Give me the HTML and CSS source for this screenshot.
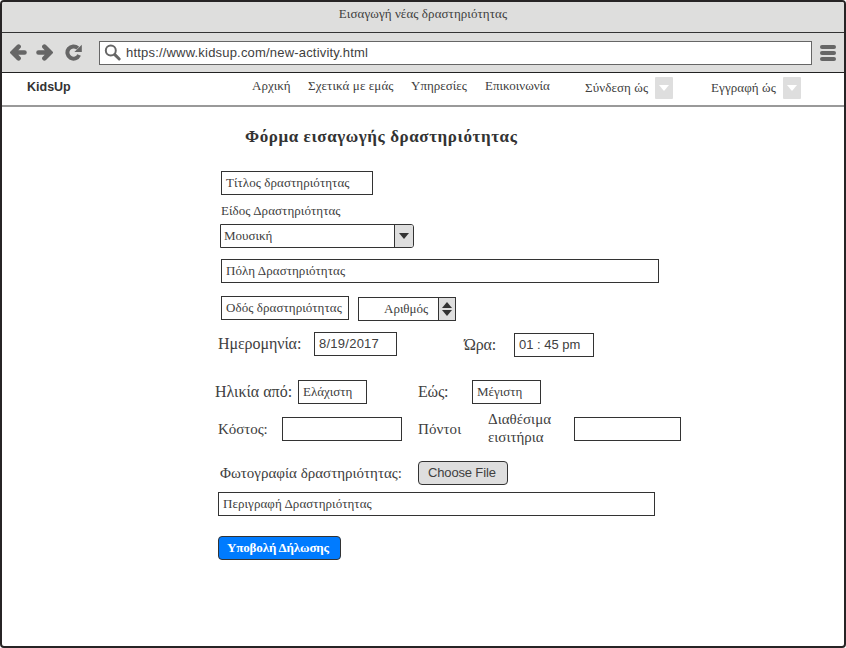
FILE: index.html
```html
<!DOCTYPE html>
<html lang="el">
<head>
<meta charset="utf-8">
<title>Εισαγωγή νέας δραστηριότητας</title>
<link rel="stylesheet" href="styles.css">
</head>
<body>
<div class="browser">
  <header class="titlebar"><span class="t-window">Εισαγωγή νέας δραστηριότητας</span></header>
  <div class="toolbar">
    <svg class="arrow" width="17" height="17" viewBox="0 0 17 17"><path d="M3 8.5H14.5M8.6 2.7L2.8 8.5L8.6 14.3"/></svg>
    <svg class="arrow forward" width="17" height="17" viewBox="0 0 17 17"><path d="M2.5 8.5H14M8.4 2.7L14.2 8.5L8.4 14.3"/></svg>
    <svg class="reload" width="17" height="17" viewBox="0 0 17 17"><path class="ring" d="M12.8 4.2A6.1 6.1 0 1 0 14.1 11"/><path class="tip" d="M16.8 0.8V8H9.4Z"/></svg>
    <div class="address">
      <svg width="18" height="18" viewBox="0 0 18 18"><circle cx="6.8" cy="6.5" r="5"/><path d="M10.8 10.6L15.2 15"/></svg>
      <span class="t-url">https://www.kidsup.com/new-activity.html</span>
    </div>
    <div class="burger"><i></i><i></i><i></i></div>
  </div>
  <nav class="nav">
    <b class="brand">KidsUp</b>
    <a class="n-home">Αρχική</a>
    <a class="n-about">Σχετικά με εμάς</a>
    <a class="n-services">Υπηρεσίες</a>
    <a class="n-contact">Επικοινωνία</a>
    <a class="n-login">Σύνδεση ώς</a>
    <span class="drop"></span>
    <a class="n-signup">Εγγραφή ώς</a>
    <span class="drop"></span>
  </nav>
  <main class="form">
    <h1>Φόρμα εισαγωγής δραστηριότητας</h1>
    <div class="field title-field"><span class="t-title">Τίτλος δραστηριότητας</span></div>
    <div class="kind-label">Είδος Δραστηριότητας</div>
    <div class="field select"><span class="t-music">Μουσική</span><span class="select-btn"></span></div>
    <div class="field city"><span class="t-city">Πόλη Δραστηριότητας</span></div>
    <div class="row street-row">
      <div class="field street"><span class="t-street">Οδός δραστηριότητας</span></div>
      <div class="field stepper"><span class="t-number">Αριθμός</span><span class="step-btn"><i class="up"></i><i class="down"></i></span></div>
    </div>
    <div class="row date-row">
      <label class="l-date">Ημερομηνία:</label>
      <div class="field date"><span class="t-date">8/19/2017</span></div>
      <label class="l-time">Ώρα:</label>
      <div class="field time"><span class="t-time">01 : 45 pm</span></div>
    </div>
    <div class="row age-row">
      <label class="l-from">Ηλικία από:</label>
      <div class="field age"><span class="t-min">Ελάχιστη</span></div>
      <label class="l-to">Εώς:</label>
      <div class="field age"><span class="t-max">Μέγιστη</span></div>
    </div>
    <div class="row cost-row">
      <label class="l-cost">Κόστος:</label>
      <div class="field cost"></div>
      <label class="l-points">Πόντοι</label>
      <label class="l-tickets"><span class="t-avail">Διαθέσιμα</span><br><span class="t-tickets">εισιτήρια</span></label>
      <div class="field tickets"></div>
    </div>
    <div class="row photo-row">
      <label class="l-photo">Φωτογραφία δραστηριότητας:</label>
      <div class="file-btn"><span class="t-file">Choose File</span></div>
    </div>
    <div class="field description"><span class="t-desc">Περιγραφή Δραστηριότητας</span></div>
    <div class="submit"><span class="t-submit">Υποβολή Δήλωσης</span></div>
  </main>
</div>
</body>
</html>
```
FILE: styles.css
```css
* { box-sizing: border-box; }
body {
  margin: 0;
  background: #fff;
  color: #404040;
  font: 13px/16px "Liberation Serif", serif;
}
span, label, a { white-space: nowrap; flex: none; }
.browser {
  width: 846px;
  height: 648px;
  border: 2px solid #272425;
  border-radius: 4px;
  overflow: hidden;
}
.titlebar {
  height: 31px;
  padding-top: 4px;
  text-align: center;
  background: #dededd;
  border-bottom: 1px solid #333;
}
.t-window { letter-spacing: 0.08px; }
.toolbar {
  display: flex;
  align-items: center;
  height: 40px;
  padding-left: 8px;
  background: #dededd;
  border-bottom: 1px solid #222;
}
.arrow path { fill: none; stroke: #666; stroke-width: 4.6; stroke-linecap: round; }
.forward { margin-left: 9px; }
.reload { margin-left: 12px; }
.reload .ring { fill: none; stroke: #666; stroke-width: 4; }
.reload .tip { fill: #666; }
.address {
  display: flex;
  align-items: center;
  width: 713px;
  height: 24px;
  margin-left: 17px;
  padding-left: 4px;
  background: #fff;
  border: 1px solid #666;
  font: 13px/16px "Liberation Sans", sans-serif;
}
.address svg { margin-right: 4px; fill: none; stroke: #666; stroke-width: 2; }
.address svg path { stroke-width: 3; stroke-linecap: round; }
.t-url { padding-top: 1px; letter-spacing: 0.19px; }
.burger { display: grid; gap: 2px; margin-left: 8px; }
.burger i { width: 16px; height: 4px; border-radius: 2px; background: #666; }
.nav {
  display: flex;
  height: 34px;
  padding: 5px 0 0 25px;
  border-bottom: 2px solid #999;
}
.brand { width: 225px; padding-top: 1px; color: #333; font: bold 12.5px/16px "Liberation Sans", sans-serif; }
.n-home { width: 56px; }
.n-about { width: 103px; letter-spacing: 0.1px; }
.n-services { width: 74px; }
.n-contact { width: 100px; }
.n-login { width: 70px; padding-top: 2px; letter-spacing: 0.1px; }
.n-signup { width: 72px; margin-left: 38px; padding-top: 2px; letter-spacing: 0.1px; }
.drop {
  display: flex;
  align-items: center;
  justify-content: center;
  width: 18px;
  height: 22px;
  margin-top: -1px;
  background: #dedede;
  border-radius: 1px;
}
.drop::before {
  content: "";
  border: 5px solid transparent;
  border-top: 6px solid #fff;
  border-bottom: 0;
}
.form { padding-left: 216px; }
h1 {
  margin: 18px 0 0 27px;
  color: #333;
  font: bold 17px/24px "Liberation Serif", serif;
  letter-spacing: 0.59px;
  white-space: nowrap;
}
.field {
  display: flex;
  align-items: center;
  height: 24px;
  padding-left: 4px;
  background: #fff;
  border: 1px solid #333;
}
.title-field { width: 152px; margin: 22px 0 0 3px; }
.t-title, .t-city, .t-street, .t-desc, .kind-label { letter-spacing: 0.07px; }
.kind-label { margin: 8px 0 0 3px; }
.select { width: 194px; margin: 5px 0 0 2px; padding-left: 3px; border-radius: 0 3px 3px 0; }
.select-btn {
  display: flex;
  align-items: center;
  justify-content: center;
  width: 19px;
  height: 22px;
  margin-left: auto;
  background: #dedede;
  border-left: 1px solid #333;
  border-radius: 0 2px 2px 0;
}
.select-btn::before {
  content: "";
  border: 5px solid transparent;
  border-top: 6px solid #333;
  border-bottom: 0;
}
.city { width: 438px; margin: 11px 0 0 3px; }
.row { display: flex; align-items: flex-start; height: 24px; }
.row label { font-size: 16px; line-height: 24px; }
.street-row { margin-top: 13px; }
.street { width: 128px; margin-left: 3px; }
.stepper { width: 98px; margin: 1px 0 0 9px; padding-left: 25px; }
.step-btn {
  display: grid;
  align-content: center;
  justify-content: center;
  gap: 2px;
  width: 17px;
  height: 22px;
  margin-left: auto;
  background: #dedede;
  border-left: 1px solid #333;
}
.step-btn i { border: 5px solid transparent; }
.step-btn .up { border-top: 0; border-bottom: 6px solid #333; }
.step-btn .down { border-bottom: 0; border-top: 6px solid #333; }
.date-row { margin-top: 12px; }
.l-date { width: 96px; letter-spacing: -0.08px; }
.date { width: 83px; }
.t-date { letter-spacing: 0.25px; }
.l-time { width: 50px; margin: 1px 0 0 67px; letter-spacing: -0.2px; }
.time { width: 80px; margin-top: 1px; }
.date, .time, .file-btn { font-family: "Liberation Sans", sans-serif; }
.age-row { margin: 24px 0 0 -3px; }
.l-from { width: 83px; }
.age { width: 69px; }
.l-to { width: 54px; margin-left: 51px; letter-spacing: -0.2px; }
.cost-row { margin-top: 13px; }
.row .l-cost { width: 64px; font-size: 15px; letter-spacing: -0.05px; }
.cost { width: 120px; }
.row .l-points { width: 70px; margin-left: 16px; font-size: 15px; letter-spacing: 0.1px; }
.row .l-tickets { width: 86px; margin-top: -7px; font-size: 15px; line-height: 18px; }
.tickets { width: 107px; }
.photo-row { margin-top: 20px; }
.row .l-photo { width: 198px; margin-left: 2px; font-size: 15px; }
.file-btn {
  width: 90px;
  height: 24px;
  padding-left: 9px;
  line-height: 22px;
  background: #dedede;
  border: 1px solid #333;
  border-radius: 4px;
}
.t-file { letter-spacing: -0.15px; }
.description { width: 437px; margin-top: 7px; }
.submit {
  width: 123px;
  height: 24px;
  margin-top: 20px;
  padding-left: 8px;
  background: #007bff;
  border: 1px solid #333;
  border-radius: 4px;
  color: #fff;
  font-weight: bold;
  line-height: 22px;
  letter-spacing: -0.14px;
}
```
